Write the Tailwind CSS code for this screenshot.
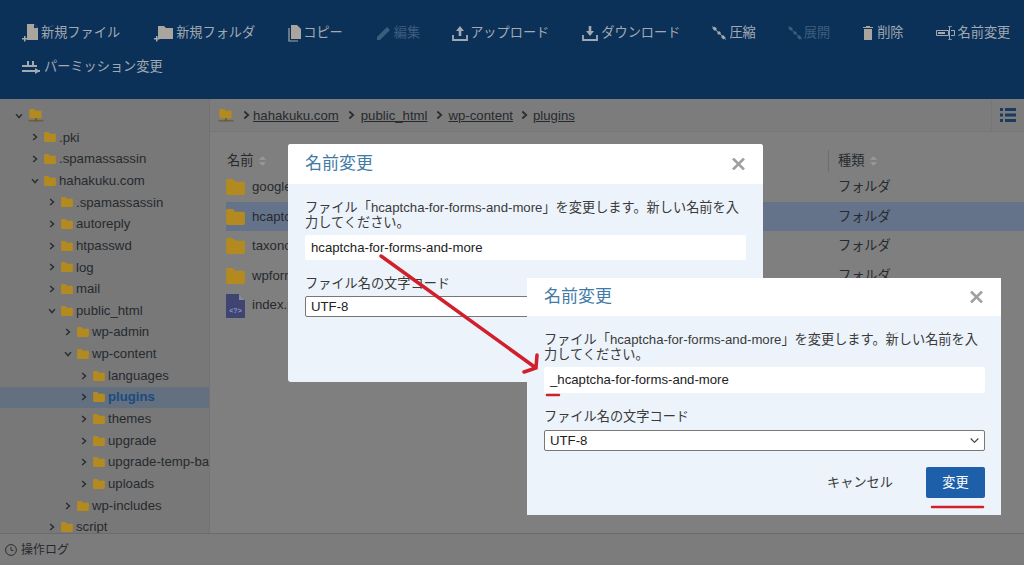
<!DOCTYPE html>
<html lang="ja">
<head>
  <meta charset="UTF-8" />
  <meta name="viewport" content="width=device-width, initial-scale=1.0" />
  <title>名前変更</title>
  <script src="https://cdn.jsdelivr.net/npm/@tailwindcss/browser@4"></script>
</head>
<body class="bg-[#7f7f7f] font-['Liberation_Sans','Noto_Sans_CJK_JP',sans-serif] text-[13.2px] text-[#262a2e]">
  <svg class="hidden">
    <symbol id="folder" viewBox="0 0 20 17"><path d="M0 1.5C0 .7.7 0 1.500 0H7l3 3h8.500c.8 0 1.500.7 1.500 1.500V15.500c0 .8-.7 1.500-1.500 1.500h-17C.7 17 0 16.300 0 15.500z" fill="#b28a1f"/></symbol>
    <symbol id="netfolder" viewBox="0 0 16 16"><path d="M1 1h5l2 2h6v8H1z" fill="#b28a1f"/><path d="M7 11h2v2h7v1.500H0V13h7z" fill="#6a5a2a"/></symbol>
    <symbol id="right" viewBox="0 0 8 10"><path d="M1.500 1 6 5 1.500 9" fill="none" stroke="#2a2e33" stroke-width="2"/></symbol>
    <symbol id="down" viewBox="0 0 10 8"><path d="M1 1.500 5 6l4-4.500" fill="none" stroke="#2a2e33" stroke-width="2"/></symbol>
    <symbol id="sort" viewBox="0 0 8 11"><path d="M4 0 8 4H0zM4 11 0 7h8z" fill="#9a9a9a"/></symbol>
  </svg>

  <div class="relative flex h-[565px] w-[1024px] flex-col overflow-hidden">
    <!-- toolbar -->
    <header class="h-[99px] shrink-0 bg-[#0b3159] pl-[22px] pt-[16px] text-[#a3a9b0]">
      <div class="flex flex-wrap gap-x-[32px]">
        <div class="flex h-[34px] items-center gap-[2px]">
          <svg class="h-[18px] w-[17px]" viewBox="0 0 17 18"><path d="M5 0h7l4 4v12H5z" fill="#aaa69f"/><path d="M12 0v4h4z" fill="#0b3159"/><path d="M2 12v2H0v1.500h2v2h1.500v-2h2V14h-2v-2z" fill="#a3a9b0"/></svg>
          <span>新規ファイル</span>
        </div>
        <div class="ml-[2px] flex h-[34px] items-center gap-[3px]">
          <svg class="h-[18px] w-[19px]" viewBox="0 0 19 18"><path d="M4 2h6l2 2h7v11H4z" fill="#aaa69f"/><path d="M2 12v2H0v1.500h2v2h1.500v-2h2V14h-2v-2z" fill="#a3a9b0"/></svg>
          <span>新規フォルダ</span>
        </div>
        <div class="ml-[1px] flex h-[34px] items-center gap-[1px]">
          <svg class="h-[17px] w-[14px]" viewBox="0 0 14 17"><path d="M3 0h6l4 4v10H3z" fill="#aaa69f"/><path d="M1 3v13h9" fill="none" stroke="#a3a9b0" stroke-width="1.200"/></svg>
          <span>コピー</span>
        </div>
        <div class="ml-[2px] flex h-[34px] items-center gap-[3px] text-[#3d5d7e]">
          <svg class="h-[14px] w-[14px]" viewBox="0 0 14 14"><path d="M0 14v-3L10 1l3 3L3 14z" fill="#3d5d7e"/></svg>
          <span>編集</span>
        </div>
        <div class="flex h-[34px] items-center gap-[2px]">
          <svg class="h-[15px] w-[16px]" viewBox="0 0 16 15"><path d="M8 0 4 5h2.700v5h2.600V5H12z" fill="#a3a9b0"/><path d="M1 9v5h14V9" fill="none" stroke="#a3a9b0" stroke-width="1.800"/></svg>
          <span>アップロード</span>
        </div>
        <div class="ml-[1px] flex h-[34px] items-center gap-[3px]">
          <svg class="h-[15px] w-[16px]" viewBox="0 0 16 15"><path d="M8 10 4 5h2.700V0h2.600v5H12z" fill="#a3a9b0"/><path d="M1 9v5h14V9" fill="none" stroke="#a3a9b0" stroke-width="1.800"/></svg>
          <span>ダウンロード</span>
        </div>
        <div class="flex h-[34px] items-center gap-[3px]">
          <svg class="h-[14px] w-[14px]" viewBox="0 0 14 14"><path d="M0 .5 14 13.500" stroke="#a3a9b0"/><path d="M1.500 1.500 4 4M6 6l2 2M10 10l2.500 2.500" stroke="#a3a9b0" stroke-width="3"/></svg>
          <span>圧縮</span>
        </div>
        <div class="flex h-[34px] items-center gap-[2px] text-[#3d5d7e]">
          <svg class="h-[14px] w-[14px]" viewBox="0 0 14 14"><path d="M0 .5 14 13.500" stroke="#3d5d7e"/><path d="M1.500 1.500 4 4M6 6l2 2M10 10l2.500 2.500" stroke="#3d5d7e" stroke-width="3"/></svg>
          <span>展開</span>
        </div>
        <div class="ml-[1px] flex h-[34px] items-center gap-[4px]">
          <svg class="h-[14px] w-[10px]" viewBox="0 0 10 14"><path d="M1 3h8v11H1zM0 1h3V0h4v1h3v1H0z" fill="#aaa69f"/></svg>
          <span>削除</span>
        </div>
        <div class="flex h-[34px] items-center gap-[3px]">
          <svg class="h-[14px] w-[19px]" viewBox="0 0 19 14"><path d="M.5 4.500h12v5H.5z" fill="none" stroke="#a3a9b0"/><path d="M2 6h7v2H2z" fill="#a3a9b0"/><path d="M12 0c1 0 1.500.5 2 1 .5-.5 1-1 2-1M13.500 1v12M12 14c1 0 1.500-.5 2-1 .5.5 1 1 2 1M15 4.500h3.500v5H15" fill="none" stroke="#a3a9b0"/></svg>
          <span>名前変更</span>
        </div>
        <div class="flex h-[34px] items-center gap-[4px]">
          <svg class="h-[15px] w-[18px]" viewBox="0 0 18 15"><path d="M0 5h15v2H0zM0 10h18v2H0z" fill="#a3a9b0"/><path d="M5 1h2v4H5zM10 1h2v4h-2zM13 8v6l5-3z" fill="#a3a9b0"/></svg>
          <span>パーミッション変更</span>
        </div>
      </div>
    </header>

    <div class="flex min-h-0 flex-1">
      <!-- tree -->
      <aside class="w-[210px] shrink-0 overflow-hidden border-r border-[#727272] bg-[#787878] pt-[6px] whitespace-nowrap">
        <ul class="[&_svg]:shrink-0 [&>li]:flex [&>li]:h-[21.67px] [&>li]:items-center">
          <li class="pl-[15px]"><svg class="mr-[2px] h-[6px] w-[8px]"><use href="#down"/></svg><svg class="ml-[3px] h-[15px] w-[16px]"><use href="#netfolder"/></svg></li>
          <li class="pl-[32px]"><svg class="h-[8px] w-[6px]"><use href="#right"/></svg><svg class="ml-[6px] mr-[3px] h-[10px] w-[12px]"><use href="#folder"/></svg>.pki</li>
          <li class="pl-[32px]"><svg class="h-[8px] w-[6px]"><use href="#right"/></svg><svg class="ml-[6px] mr-[3px] h-[10px] w-[12px]"><use href="#folder"/></svg>.spamassassin</li>
          <li class="pl-[31px]"><svg class="h-[6px] w-[8px]"><use href="#down"/></svg><svg class="ml-[5px] mr-[3px] h-[10px] w-[12px]"><use href="#folder"/></svg>hahakuku.com</li>
          <li class="pl-[49px]"><svg class="h-[8px] w-[6px]"><use href="#right"/></svg><svg class="ml-[6px] mr-[3px] h-[10px] w-[12px]"><use href="#folder"/></svg>.spamassassin</li>
          <li class="pl-[49px]"><svg class="h-[8px] w-[6px]"><use href="#right"/></svg><svg class="ml-[6px] mr-[3px] h-[10px] w-[12px]"><use href="#folder"/></svg>autoreply</li>
          <li class="pl-[49px]"><svg class="h-[8px] w-[6px]"><use href="#right"/></svg><svg class="ml-[6px] mr-[3px] h-[10px] w-[12px]"><use href="#folder"/></svg>htpasswd</li>
          <li class="pl-[49px]"><svg class="h-[8px] w-[6px]"><use href="#right"/></svg><svg class="ml-[6px] mr-[3px] h-[10px] w-[12px]"><use href="#folder"/></svg>log</li>
          <li class="pl-[49px]"><svg class="h-[8px] w-[6px]"><use href="#right"/></svg><svg class="ml-[6px] mr-[3px] h-[10px] w-[12px]"><use href="#folder"/></svg>mail</li>
          <li class="pl-[48px]"><svg class="h-[6px] w-[8px]"><use href="#down"/></svg><svg class="ml-[5px] mr-[3px] h-[10px] w-[12px]"><use href="#folder"/></svg>public_html</li>
          <li class="pl-[65px]"><svg class="h-[8px] w-[6px]"><use href="#right"/></svg><svg class="ml-[6px] mr-[3px] h-[10px] w-[12px]"><use href="#folder"/></svg>wp-admin</li>
          <li class="pl-[64px]"><svg class="h-[6px] w-[8px]"><use href="#down"/></svg><svg class="ml-[5px] mr-[3px] h-[10px] w-[12px]"><use href="#folder"/></svg>wp-content</li>
          <li class="pl-[81px]"><svg class="h-[8px] w-[6px]"><use href="#right"/></svg><svg class="ml-[6px] mr-[3px] h-[10px] w-[12px]"><use href="#folder"/></svg>languages</li>
          <li class="bg-[#62707f] pl-[81px] font-bold text-[#1c4a80]"><svg class="h-[8px] w-[6px]"><use href="#right"/></svg><svg class="ml-[6px] mr-[3px] h-[10px] w-[12px]"><use href="#folder"/></svg>plugins</li>
          <li class="pl-[81px]"><svg class="h-[8px] w-[6px]"><use href="#right"/></svg><svg class="ml-[6px] mr-[3px] h-[10px] w-[12px]"><use href="#folder"/></svg>themes</li>
          <li class="pl-[81px]"><svg class="h-[8px] w-[6px]"><use href="#right"/></svg><svg class="ml-[6px] mr-[3px] h-[10px] w-[12px]"><use href="#folder"/></svg>upgrade</li>
          <li class="pl-[81px]"><svg class="h-[8px] w-[6px]"><use href="#right"/></svg><svg class="ml-[6px] mr-[3px] h-[10px] w-[12px]"><use href="#folder"/></svg>upgrade-temp-ba</li>
          <li class="pl-[81px]"><svg class="h-[8px] w-[6px]"><use href="#right"/></svg><svg class="ml-[6px] mr-[3px] h-[10px] w-[12px]"><use href="#folder"/></svg>uploads</li>
          <li class="pl-[65px]"><svg class="h-[8px] w-[6px]"><use href="#right"/></svg><svg class="ml-[6px] mr-[3px] h-[10px] w-[12px]"><use href="#folder"/></svg>wp-includes</li>
          <li class="pl-[49px]"><svg class="h-[8px] w-[6px]"><use href="#right"/></svg><svg class="ml-[6px] mr-[3px] h-[10px] w-[12px]"><use href="#folder"/></svg>script</li>
        </ul>
      </aside>

      <main class="min-w-0 flex-1">
        <!-- breadcrumb -->
        <div class="flex h-[33px] items-center border-b border-[#767676] bg-[#7c7c7c] pl-[8px]">
          <svg class="h-[15px] w-[16px]"><use href="#netfolder"/></svg>
          <svg class="ml-[9px] mr-[3px] h-[10px] w-[7px]"><use href="#right"/></svg><a class="pt-[2px] underline">hahakuku.com</a>
          <svg class="ml-[9px] mr-[6px] h-[10px] w-[7px]"><use href="#right"/></svg><a class="pt-[2px] underline">public_html</a>
          <svg class="ml-[8px] mr-[6px] h-[10px] w-[7px]"><use href="#right"/></svg><a class="pt-[2px] underline">wp-content</a>
          <svg class="ml-[8px] mr-[5px] h-[10px] w-[7px]"><use href="#right"/></svg><a class="pt-[2px] underline">plugins</a>
          <div class="ml-auto flex h-full w-[33px] items-center justify-center border-l border-[#767676]">
            <svg class="h-[14px] w-[16px]" viewBox="0 0 16 14"><path d="M0 0h3v3H0zM5 0h11v3H5zM0 5.500h3v3H0zM5 5.500h11v3H5zM0 11h3v3H0zM5 11h11v3H5z" fill="#1a3a5f"/></svg>
          </div>
        </div>

        <!-- file list -->
        <div class="pl-[16px] pt-[18px]">
          <div class="flex h-[22px] items-center">
            <div class="flex w-[602px] items-center gap-[6px] pl-[1px]">名前<svg class="h-[10px] w-[7px]"><use href="#sort"/></svg></div>
            <div class="flex h-full items-center gap-[6px] border-l border-[#6e6e6e] pl-[9px]">種類<svg class="h-[10px] w-[7px]"><use href="#sort"/></svg></div>
          </div>
          <div class="flex h-[29.700px] items-center">
            <svg class="h-[16px] w-[19px]"><use href="#folder"/></svg><span class="ml-[7px] w-[576px]">google</span><span class="pl-[10px]">フォルダ</span>
          </div>
          <div class="flex h-[29.700px] items-center bg-[#65738a]">
            <svg class="h-[16px] w-[19px]"><use href="#folder"/></svg><span class="ml-[7px] w-[576px]">hcaptcha</span><span class="pl-[10px]">フォルダ</span>
          </div>
          <div class="flex h-[29.700px] items-center">
            <svg class="h-[16px] w-[19px]"><use href="#folder"/></svg><span class="ml-[7px] w-[576px]">taxonomy</span><span class="pl-[10px]">フォルダ</span>
          </div>
          <div class="flex h-[29.700px] items-center">
            <svg class="h-[16px] w-[19px]"><use href="#folder"/></svg><span class="ml-[7px] w-[576px]">wpforms</span><span class="pl-[10px]">フォルダ</span>
          </div>
          <div class="flex h-[29.700px] items-center">
            <svg class="h-[24px] w-[19px]" viewBox="0 0 19 24"><path d="M0 0h13l6 6v18H0z" fill="#3f4470"/><path d="M13 0v6h6z" fill="#8a8a94"/><text x="9.500" y="19" font-size="7" font-weight="700" font-family="Liberation Sans" fill="#8f98c8" text-anchor="middle">&lt;?&gt;</text></svg><span class="ml-[7px] -translate-y-[1px]">index.php</span>
          </div>
        </div>
      </main>
    </div>

    <!-- log bar -->
    <footer class="flex h-[32px] shrink-0 items-center gap-[4px] border-t border-[#6c6c6c] bg-[#7c7c7c] pl-[5px] text-[12px]">
      <svg class="h-[12px] w-[12px]" viewBox="0 0 12 12"><circle cx="6" cy="6" r="5.400" fill="none" stroke="#2a2e33"/><path d="M6 3v3.300h2.500" fill="none" stroke="#2a2e33"/></svg>
      <span>操作ログ</span>
    </footer>

    <!-- first dialog -->
    <section class="absolute left-[288px] top-[144px] h-[238px] w-[475px] overflow-hidden rounded-[3px] bg-[#ecf3fb]">
      <div class="flex h-[40px] items-center justify-between bg-white pl-[17px] pr-[18px]">
        <h2 class="text-[17px] text-[#3f7ba6]">名前変更</h2>
        <svg class="h-[12px] w-[13px]" viewBox="0 0 13 12"><path d="m1 .5 11 11M12 .5l-11 11" stroke="#a0a0a0" stroke-width="2.600"/></svg>
      </div>
      <div class="px-[17px] pt-[16px]">
        <p class="leading-[15px] text-[#3a3a3a]">ファイル「hcaptcha-for-forms-and-more」を変更します。新しい名前を入力してください。</p>
        <div class="mt-[5px] flex h-[25px] items-center rounded-[2px] bg-white px-[6px] text-[#222]">hcaptcha-for-forms-and-more</div>
        <p class="mt-[16px] leading-[16px] text-[#3a3a3a]">ファイル名の文字コード</p>
        <div class="mt-[4px] flex h-[21px] items-center rounded-[2px] border border-[#777] bg-white px-[5px] text-[#222]">UTF-8</div>
      </div>
    </section>

    <!-- second dialog -->
    <section class="absolute left-[527px] top-[278px] h-[237px] w-[474px] overflow-hidden bg-[#ecf3fb]">
      <div class="flex h-[38px] items-center justify-between bg-white pl-[17px] pr-[18px]">
        <h2 class="text-[17px] text-[#3f7ba6]">名前変更</h2>
        <svg class="h-[12px] w-[13px]" viewBox="0 0 13 12"><path d="m1 .5 11 11M12 .5l-11 11" stroke="#a0a0a0" stroke-width="2.600"/></svg>
      </div>
      <div class="pl-[17px] pr-[16px] pt-[16px]">
        <p class="leading-[15px] text-[#3a3a3a]">ファイル「hcaptcha-for-forms-and-more」を変更します。新しい名前を入力してください。</p>
        <div class="mt-[5px] flex h-[26px] items-center rounded-[2px] bg-white px-[6px] text-[#222]">_hcaptcha-for-forms-and-more</div>
        <p class="mt-[16px] leading-[16px] text-[#3a3a3a]">ファイル名の文字コード</p>
        <div class="mt-[5px] flex h-[21px] items-center justify-between rounded-[2px] border border-[#777] bg-white px-[5px] text-[#222]">
          UTF-8
          <svg class="h-[5px] w-[9px]" viewBox="0 0 9 5"><path d="m.7.5 3.800 3.800L8.300.5" fill="none" stroke="#444" stroke-width="1.200"/></svg>
        </div>
        <div class="mt-[16px] flex items-center justify-end gap-[33px]">
          <span class="text-[#3a3a3a]">キャンセル</span>
          <button class="h-[31px] w-[59px] rounded-[2px] bg-[#1d5fa8] text-white">変更</button>
        </div>
      </div>
    </section>

    <!-- red markup -->
    <svg class="absolute left-0 top-0 h-[565px] w-[1024px]" viewBox="0 0 1024 565">
      <path d="M381 256 536 368M537 355l-1 13-12 4" fill="none" stroke="#d0202c" stroke-width="3.500" stroke-linecap="round"/>
      <path d="M547 395h12M932 507h51" fill="none" stroke="#d0202c" stroke-width="2.500" stroke-linecap="round"/>
    </svg>
  </div>
</body>
</html>
